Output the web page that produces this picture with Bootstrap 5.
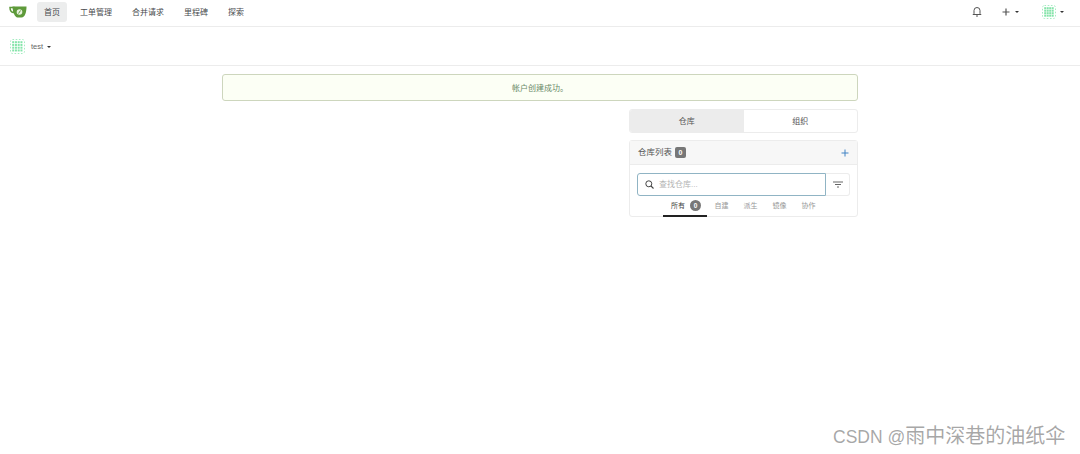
<!DOCTYPE html>
<html lang="zh-CN">
<head>
    <meta charset="UTF-8">
    <title>test - 仪表板</title>
    <link href="https://cdn.jsdelivr.net/npm/bootstrap@5.3.2/dist/css/bootstrap.min.css" rel="stylesheet">
    <style>
        html, body { height: 454px; overflow: hidden; }
        body { font-family: "Liberation Sans", "Noto Sans CJK SC", sans-serif; font-size: 8px; color: #555; background: #fff; position: relative; }
        .top-nav { height: 27px; border-bottom: 1px solid #ececec; padding: 0 10px 3px 9px; }
        .top-logo { width: 18px; height: 12px; margin-right: 10px; }
        .top-link { height: 20px; line-height: 21px; padding: 0 7px; margin-right: 6px; border-radius: 3px; color: #484b4e; font-size: 8px; text-decoration: none; }
        .top-link.is-active { background: #eceded; }
        .bell-icon { margin-right: 20px; }
        .caret-down { display: inline-block; width: 0; height: 0; border-left: 2px solid transparent; border-right: 2px solid transparent; border-top: 2px solid #333; }
        .plus-caret { margin-left: 5px; margin-right: 23px; }
        .avatar-caret { margin-left: 4px; margin-right: 6px; }
        .user-bar { height: 39px; border-bottom: 1px solid #ececec; padding: 1px 10px 0; }
        .user-name { font-size: 7.5px; color: #666; margin-left: 6px; }
        .page-wrap { width: 636px; margin-left: 222px; padding-top: 8px; }
        .flash-ok { height: 27px; line-height: 27px; margin-bottom: 8px; background: #fcfff5; border: 1px solid #cdd6bd; border-radius: 3px; text-align: center; color: #6a8a68; }
        .side-panel { width: 229px; margin-left: auto; }
        .tab-pair { height: 24px; border: 1px solid #ececec; border-radius: 3px; overflow: hidden; margin-bottom: 7px; }
        .tab-item { flex: 1; line-height: 23px; text-align: center; color: #555; }
        .tab-item.is-active { background: #ececec; }
        .repo-box { height: 77px; border: 1px solid #ececec; border-radius: 3px; }
        .repo-head { height: 24px; padding: 0 8px; background: #f7f7f7; border-bottom: 1px solid #ececec; color: #555; font-size: 8.5px; }
        .count-tag { width: 11px; height: 11px; background: #777; color: #fff; font-size: 7px; font-weight: 700; line-height: 11px; text-align: center; border-radius: 2px; margin-left: 3px; }
        .add-icon { margin-left: auto; }
        .repo-body { padding: 8px 7px 0; }
        .search-row { height: 23px; margin-bottom: 2px; }
        .search-box { flex: 1; border: 1px solid #90b4c4; border-radius: 3px 0 0 3px; padding-left: 7px; color: #b4b4b4; gap: 5px; }
        .filter-box { width: 24px; border: 1px solid #ececec; border-left: 0; border-radius: 0 3px 3px 0; }
        .repo-tabs { padding-left: 26px; height: 18px; color: #999; font-size: 7px; }
        .repo-tab { height: 19px; line-height: 16px; padding: 0 7.5px; }
        .repo-tab.is-active { width: 44px; color: #444; border-bottom: 2px solid #222; padding: 0 8px; }
        .round-count { display: inline-block; width: 11px; height: 11px; line-height: 11px; border-radius: 50%; background: #777; color: #fff; font-size: 6.5px; font-weight: 700; text-align: center; margin-left: 5px; }
        .watermark { position: absolute; left: 833px; top: 424px; font-size: 20px; line-height: 24px; color: rgba(80, 80, 80, .5); white-space: nowrap; }
        .watermark-latin { font-size: 17.5px; }
    </style>
</head>
<body>

<nav class="top-nav d-flex align-items-center">
    <svg class="top-logo" viewBox="0 0 18 12">
        <path d="M1 1.5 H5 V6.5 C2.5 6.5 1 4.5 1 1.5Z" fill="none" stroke="#5e9a3a" stroke-width="1.5"/>
        <path d="M3.5 .5 H17.5 C17.5 6 16 11.5 12.5 11.5 H8.5 C6 11.5 3.5 6 3.5 .5Z" fill="#5e9a3a"/>
        <circle cx="10.5" cy="6" r="2.8" fill="#e8f2de"/>
        <path d="M9.5 7.5 L11.5 4.5" stroke="#5e9a3a" stroke-width="1"/>
    </svg>
    <a class="top-link is-active" href="#">首页</a>
    <a class="top-link" href="#">工单管理</a>
    <a class="top-link" href="#">合并请求</a>
    <a class="top-link" href="#">里程碑</a>
    <a class="top-link" href="#">探索</a>
    <div class="ms-auto d-flex align-items-center">
        <svg class="bell-icon" width="10" height="11" viewBox="0 0 10 11">
            <path d="M2 7.5 V4.5 a3 3 0 0 1 6 0 V7.5 L9 8.5 H1Z M4 10 h2" fill="none" stroke="#555" stroke-width="1"/>
        </svg>
        <svg width="8" height="8" viewBox="0 0 8 8"><path d="M4 .5 V7.5 M.5 4 H7.5" stroke="#555" stroke-width="1.2"/></svg>
        <span class="caret-down plus-caret"></span>
        <svg width="14" height="14" viewBox="0 0 14 14" id="topAvatar"></svg>
        <span class="caret-down avatar-caret"></span>
    </div>
</nav>

<div class="user-bar d-flex align-items-center">
    <svg width="15" height="15" viewBox="0 0 15 15" id="userAvatar"></svg>
    <span class="user-name">test</span>
    <span class="caret-down ms-1"></span>
</div>

<div class="page-wrap">
    <div class="flash-ok">帐户创建成功。</div>
    <div class="side-panel">
        <div class="tab-pair d-flex">
            <div class="tab-item is-active">仓库</div>
            <div class="tab-item">组织</div>
        </div>
        <div class="repo-box">
            <div class="repo-head d-flex align-items-center">
                <span>仓库列表</span><span class="count-tag">0</span>
                <svg class="add-icon" width="8" height="8" viewBox="0 0 8 8"><path d="M4 .5 V7.5 M.5 4 H7.5" stroke="#4183c4" stroke-width="1"/></svg>
            </div>
            <div class="repo-body">
                <div class="search-row d-flex">
                    <div class="search-box d-flex align-items-center">
                        <svg width="9" height="9" viewBox="0 0 9 9"><circle cx="3.8" cy="3.8" r="3" fill="none" stroke="#444" stroke-width="1"/><path d="M6 6 L8.5 8.5" stroke="#444" stroke-width="1.1"/></svg>
                        <span>查找仓库...</span>
                    </div>
                    <div class="filter-box d-flex align-items-center justify-content-center">
                        <svg width="10" height="7" viewBox="0 0 10 7"><path d="M0 1 H10 M2 3.5 H8 M4 6 H6" stroke="#666" stroke-width="1"/></svg>
                    </div>
                </div>
                <div class="repo-tabs d-flex">
                    <div class="repo-tab is-active text-nowrap">所有<span class="round-count">0</span></div>
                    <div class="repo-tab">自建</div>
                    <div class="repo-tab">派生</div>
                    <div class="repo-tab">镜像</div>
                    <div class="repo-tab">协作</div>
                </div>
            </div>
        </div>
    </div>
</div>

<div class="watermark"><span class="watermark-latin">CSDN @</span>雨中深巷的油纸伞</div>

<script src="https://cdn.jsdelivr.net/npm/bootstrap@5.3.2/dist/js/bootstrap.bundle.min.js"></script>
<script>
    // dotted identicon avatars: 4x4 dots inside a dashed outline
    function drawDots(id, size) {
        const svg = document.getElementById(id);
        const step = (size - 4) / 4;
        let out = '<rect x=".5" y=".5" width="' + (size - 1) + '" height="' + (size - 1) + '" rx="2" fill="none" stroke="#a6ecc2" stroke-dasharray="1.6 1.6"/>';
        for (let row = 0; row < 4; row++) {
            for (let col = 0; col < 4; col++) {
                out += '<rect x="' + (col * step + 2.2) + '" y="' + (row * step + 2.2) + '" width="2" height="2" fill="#85e4aa"/>';
            }
        }
        svg.innerHTML = out;
    }
    drawDots('topAvatar', 14);
    drawDots('userAvatar', 15);
</script>

</body>
</html>
